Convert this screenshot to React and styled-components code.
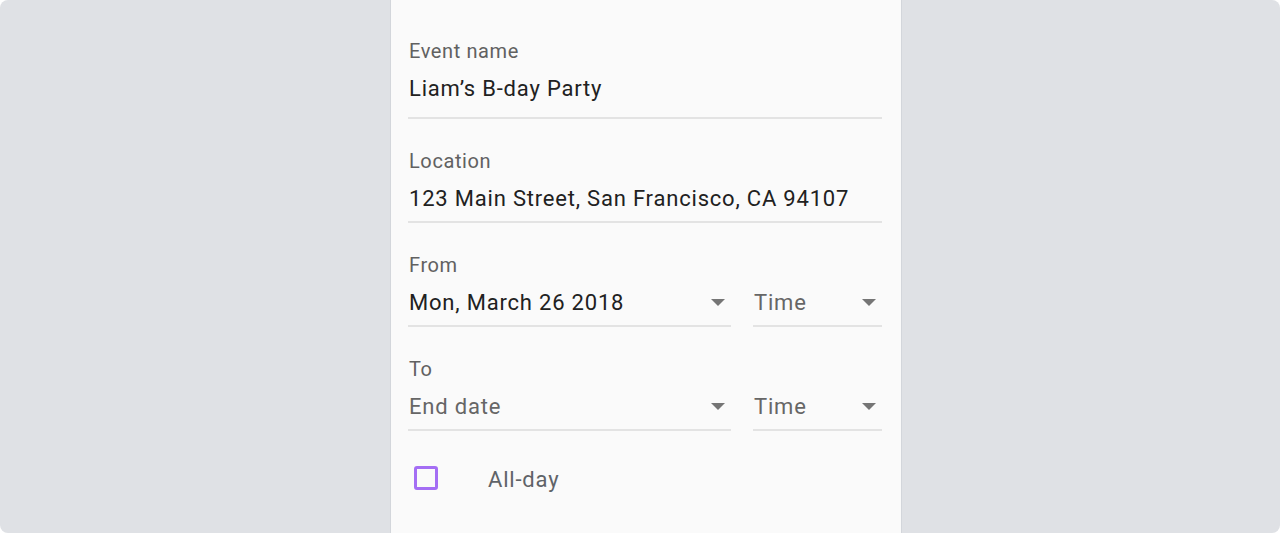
import React from 'react';
import styled, { createGlobalStyle } from 'styled-components';

const GlobalStyle = createGlobalStyle`
  html, body {
    margin: 0;
    padding: 0;
    background: #ffffff;
  }
  body {
    font-family: Roboto, "Noto Sans", "Liberation Sans", sans-serif;
  }
`;

const Page = styled.div`
  height: 533px;
  background: #dfe1e5;
  border-radius: 8px;
  overflow: hidden;
  display: flex;
  padding-left: 390px;
  box-sizing: border-box;
`;

const Panel = styled.div`
  width: 512px;
  height: 100%;
  box-sizing: border-box;
  background: #fafafa;
  border-left: 1px solid #d3d6db;
  border-right: 1px solid #d3d6db;
  padding: 39px 19px 0 17px;
  display: flex;
  flex-direction: column;
`;

const Field = styled.div`
  display: flex;
  flex-direction: column;
  margin-bottom: 30px;
`;

const Label = styled.div`
  font-size: 20px;
  line-height: 24px;
  letter-spacing: 0.6px;
  color: #616161;
  margin-bottom: 10px;
  padding-left: 1px;
`;

const Row = styled.div`
  display: flex;
  gap: 22px;
`;

const Input = styled.div`
  flex: ${(p) => (p.$grow ? '1' : `0 0 ${p.$width || 128}px`)};
  height: 32px;
  padding-bottom: ${(p) => (p.$tall ? 12 : 6)}px;
  border-bottom: 2px solid #e3e3e3;
  display: flex;
  align-items: center;
  justify-content: space-between;
  font-size: 22px;
  line-height: 32px;
  letter-spacing: 0.8px;
  color: ${(p) => (p.$placeholder ? '#666666' : '#212121')};
  padding-left: 1px;
`;

const Caret = styled.span`
  width: 0;
  height: 0;
  border-left: 7px solid transparent;
  border-right: 7px solid transparent;
  border-top: 7px solid #757575;
  margin-right: 6px;
  margin-top: -2px;
`;

const CheckRow = styled.label`
  display: flex;
  align-items: center;
  height: 32px;
  margin-top: 2px;
`;

const Box = styled.span`
  width: 24px;
  height: 24px;
  box-sizing: border-box;
  border: 3px solid #a46ef4;
  border-radius: 3px;
  margin-left: 6px;
  margin-top: -2px;
`;

const CheckText = styled.span`
  font-size: 22px;
  letter-spacing: 0.8px;
  color: #5f6368;
  margin-left: 50px;
`;

function Select({ value, placeholder, grow, width }) {
  return (
    <Input $grow={grow} $width={width} $placeholder={placeholder}>
      <span>{value}</span>
      <Caret />
    </Input>
  );
}

export default function App() {
  return (
    <>
      <GlobalStyle />
      <Page>
        <Panel>
          <Field>
            <Label>Event name</Label>
            <Input $grow $tall>Liam’s B-day Party</Input>
          </Field>
          <Field>
            <Label>Location</Label>
            <Input $grow>123 Main Street, San Francisco, CA 94107</Input>
          </Field>
          <Field>
            <Label>From</Label>
            <Row>
              <Select grow value="Mon, March 26 2018" />
              <Select placeholder value="Time" width={128} />
            </Row>
          </Field>
          <Field>
            <Label>To</Label>
            <Row>
              <Select grow placeholder value="End date" />
              <Select placeholder value="Time" width={128} />
            </Row>
          </Field>
          <CheckRow>
            <Box />
            <CheckText>All-day</CheckText>
          </CheckRow>
        </Panel>
      </Page>
    </>
  );
}
